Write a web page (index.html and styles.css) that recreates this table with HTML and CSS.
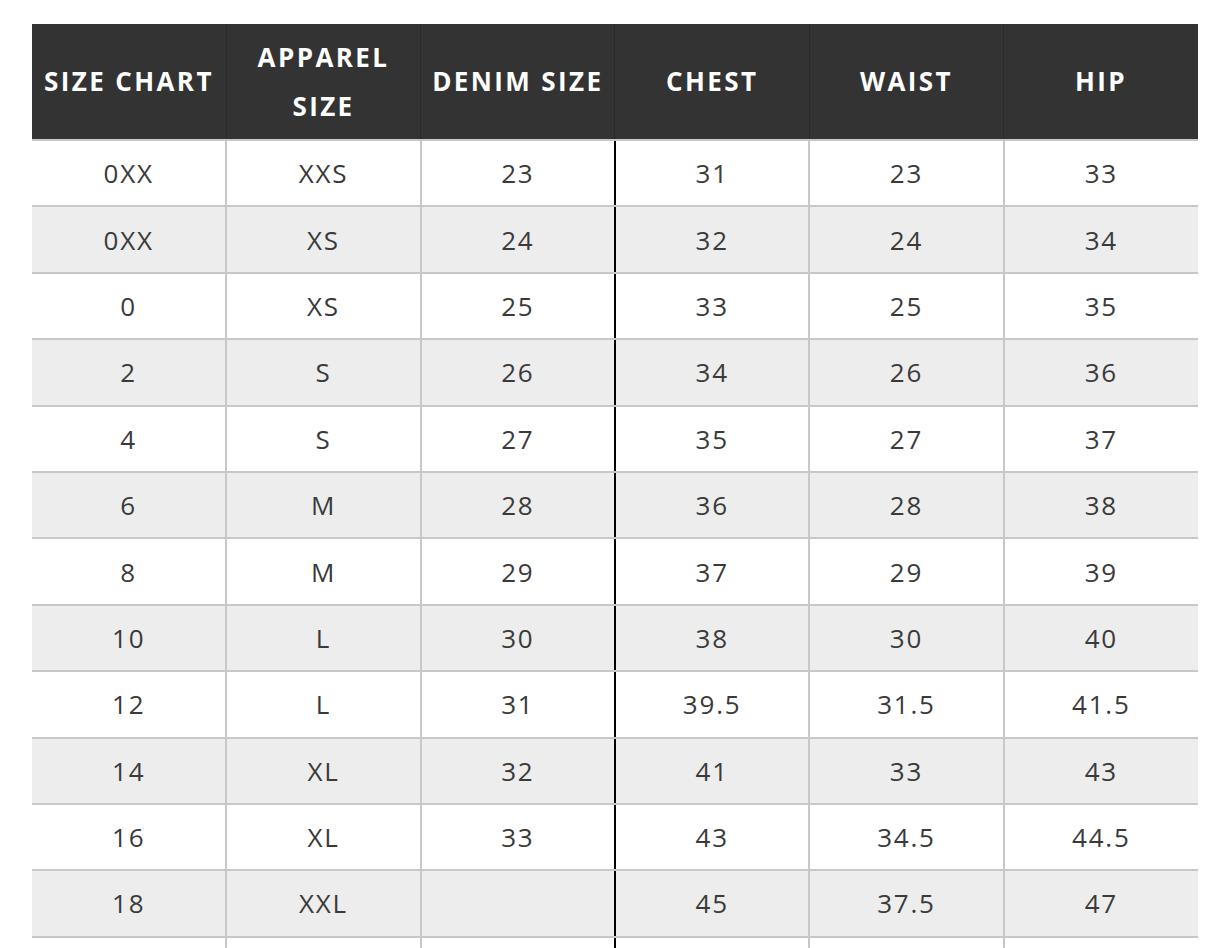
FILE: index.html
```html
<!DOCTYPE html>
<html>
<head>
<meta charset="utf-8">
<link rel="stylesheet" href="styles.css">
</head>
<body>
<div class="wrap">
<table class="chart">
  <thead>
    <tr>
      <th>SIZE CHART</th>
      <th>APPAREL<br>SIZE</th>
      <th>DENIM SIZE</th>
      <th>CHEST</th>
      <th>WAIST</th>
      <th>HIP</th>
    </tr>
  </thead>
  <tbody>
    <tr><td>0XX</td><td>XXS</td><td class="split">23</td><td>31</td><td>23</td><td>33</td></tr>
    <tr><td>0XX</td><td>XS</td><td class="split">24</td><td>32</td><td>24</td><td>34</td></tr>
    <tr><td>0</td><td>XS</td><td class="split">25</td><td>33</td><td>25</td><td>35</td></tr>
    <tr><td>2</td><td>S</td><td class="split">26</td><td>34</td><td>26</td><td>36</td></tr>
    <tr><td>4</td><td>S</td><td class="split">27</td><td>35</td><td>27</td><td>37</td></tr>
    <tr><td>6</td><td>M</td><td class="split">28</td><td>36</td><td>28</td><td>38</td></tr>
    <tr><td>8</td><td>M</td><td class="split">29</td><td>37</td><td>29</td><td>39</td></tr>
    <tr><td>10</td><td>L</td><td class="split">30</td><td>38</td><td>30</td><td>40</td></tr>
    <tr><td>12</td><td>L</td><td class="split">31</td><td>39.5</td><td>31.5</td><td>41.5</td></tr>
    <tr><td>14</td><td>XL</td><td class="split">32</td><td>41</td><td>33</td><td>43</td></tr>
    <tr><td>16</td><td>XL</td><td class="split">33</td><td>43</td><td>34.5</td><td>44.5</td></tr>
    <tr><td>18</td><td>XXL</td><td class="split"></td><td>45</td><td>37.5</td><td>47</td></tr>
    <tr><td></td><td></td><td class="split"></td><td></td><td></td><td></td></tr>
  </tbody>
</table>
</div>
</body>
</html>
```
FILE: styles.css
```css
html, body {
  margin: 0;
  padding: 0;
  background: #fff;
}
.wrap {
  padding: 24px 16px 0 32px;
}
.chart {
  width: 1166px;
  table-layout: fixed;
  border-collapse: collapse;
  font-family: "Open Sans", "Liberation Sans", sans-serif;
}
.chart th {
  background: #333333;
  color: #fff;
  font-weight: 700;
  font-size: 26px;
  letter-spacing: 2.4px;
  line-height: 49px;
  height: 115px;
  padding: 0;
  text-align: center;
  vertical-align: middle;
  border-left: 1px solid #2a2a2a;
  border-right: 1px solid #2a2a2a;
  border-bottom: 2px solid #c8c8c8;
}
.chart th:first-child { border-left: none; }
.chart th:last-child { border-right: none; }
.chart td {
  color: #3a3a3a;
  font-size: 26px;
  letter-spacing: 1.8px;
  height: 64.4px;
  padding: 0;
  text-align: center;
  vertical-align: middle;
  border: 2px solid #c8c8c8;
  border-top: none;
}
.chart td:first-child { border-left: none; }
.chart td:last-child { border-right: none; }
.chart tbody tr:nth-child(even) td {
  background: #ededed;
}
.chart td.split {
  border-right: 2px solid #000;
}
```
